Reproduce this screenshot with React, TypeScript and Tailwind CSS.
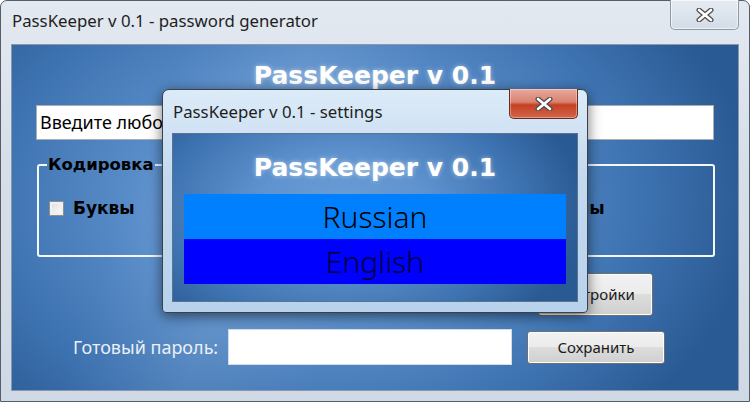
import React from "react";

const clientBg =
  "bg-[radial-gradient(ellipse_60%_90%_at_42%_45%,#6c9ed7_0%,#5f93cf_35%,#3d72b0_75%,#2a5a93_100%)]";

function Win7Button({ children, className = "" }: { children: React.ReactNode; className?: string }) {
  return (
    <div
      className={
        "flex items-center justify-center rounded-[3px] border border-[#707070] bg-[linear-gradient(to_bottom,#f2f2f2_0%,#ebebeb_49%,#dddddd_50%,#cfcfcf_100%)] shadow-[inset_0_0_0_1px_#fcfcfc] text-[15px] text-[#1a1a1a] " +
        className
      }
      style={{ fontFamily: "'Noto Sans', sans-serif" }}
    >
      {children}
    </div>
  );
}

function CloseX({ className = "" }: { className?: string }) {
  return (
    <svg width="18" height="14" viewBox="0 0 18 14" className={className}>
      <path d="M3 2 L15 12 M15 2 L3 12" stroke="#4d4d4d" strokeWidth="5" strokeLinecap="round" />
      <path d="M3 2 L15 12 M15 2 L3 12" stroke="#ffffff" strokeWidth="2.6" strokeLinecap="round" />
    </svg>
  );
}

const dejavu = { fontFamily: "'DejaVu Sans', sans-serif" };

export default function App() {
  return (
    <div
      className="relative w-[750px] h-[402px] overflow-hidden bg-white"
      style={{ fontFamily: "'Noto Sans', sans-serif" }}
    >
      {/* Main window */}
      <div className="absolute inset-0 flex flex-col rounded-t-[7px] border border-[#575d66] bg-[linear-gradient(to_bottom,#e3e9f1_0%,#d6dfe9_40%,#cfd9e5_100%)]">
        {/* Title bar */}
        <div className="relative flex h-[43px] items-start">
          <div className="pl-[11px] pt-[7px] text-[16.8px] text-[#1e1e1e]">
            PassKeeper v 0.1 - password generator
          </div>
          <div className="absolute right-[10px] top-[-1px] flex h-[30px] w-[69px] items-center justify-center rounded-b-[5px] border border-t-0 border-[#8d99a8] bg-[linear-gradient(to_bottom,#e6ecf3,#d3dce7)] shadow-[inset_0_0_0_1px_rgba(255,255,255,0.6)]">
            <CloseX />
          </div>
        </div>

        {/* Client area */}
        <div className={"relative mx-[10px] h-[347px] border border-[#8a98a9] flex flex-col " + clientBg}>
          <div className="absolute inset-0 bg-[linear-gradient(110deg,rgba(255,255,255,0)_20%,rgba(255,255,255,0.08)_35%,rgba(255,255,255,0)_50%)]" />
          {/* Heading */}
          <div className="relative flex justify-center pt-[12px] h-[60px]">
            <div className="text-[25px] font-bold text-white [text-shadow:0_0_5px_rgba(255,255,255,0.5)]" style={dejavu}>
              PassKeeper v 0.1
            </div>
          </div>

          {/* Input */}
          <div className="relative ml-[24px] mr-[24px] h-[35px] bg-white border border-[#abadb3] flex items-center pl-[3px] text-[18px] text-black">
            Введите любое слово
          </div>

          {/* Group box */}
          <fieldset className="relative ml-[25px] mr-[23px] mt-[15px] h-[102px] rounded-[3px] border-2 border-[#f4f7fb] px-[8px]">
            <legend className="px-[1px] text-[16.5px] leading-[20px] font-bold text-black" style={dejavu}>
              Кодировка
            </legend>
            <div className="absolute left-[10px] top-[21px] flex items-center gap-[9px]">
              <div className="h-[15px] w-[15px] border border-[#8f8f8f] bg-[linear-gradient(135deg,#dcdcdc,#ffffff)] shadow-[inset_0_0_0_2px_#f0f0f0]" />
              <div className="text-[17px] font-bold text-black" style={dejavu}>
                Буквы
              </div>
            </div>
            <div className="absolute left-[477px] top-[21px] text-[17px] font-bold text-black" style={dejavu}>
              Символы
            </div>
          </fieldset>

          {/* Buttons row */}
          <div className="relative flex mt-[16px] h-[43px]">
            <Win7Button className="ml-[216px] mt-[-1px] h-[40px] w-[281px]">Сгенерировать</Win7Button>
            <Win7Button className="ml-[29px] h-[43px] w-[115px] border-[#3cc7f0] shadow-[0_0_3px_#7fe3ff,inset_0_0_0_1px_#c5f2ff]">
              Настройки
            </Win7Button>
          </div>

          {/* Bottom row */}
          <div className="relative flex items-center mt-[13px] h-[36px]">
            <div className="ml-[61px] w-[155px] text-[18px] text-[#eaf0f7]">Готовый пароль:</div>
            <div className="h-[36px] w-[284px] bg-white border border-[#d5dce6]" />
            <Win7Button className="ml-[15px] h-[33px] w-[138px]">Сохранить</Win7Button>
          </div>
        </div>
      </div>

      {/* Settings dialog */}
      <div className="absolute left-[162px] top-[89px] w-[426px] h-[224px] rounded-t-[7px] rounded-b-[4px] border border-[#39414b] bg-[linear-gradient(to_bottom,#dcebf8_0%,#c3d9ef_40%,#b9d2ec_100%)] shadow-[0_3px_14px_rgba(0,0,0,0.55)] flex flex-col">
        <div className="relative h-[43px]">
          <div className="pl-[10px] pt-[9px] text-[16.8px] text-[#1e1e1e]">PassKeeper v 0.1 - settings</div>
          <div className="absolute right-[9px] top-[-1px] flex h-[30px] w-[69px] items-center justify-center rounded-b-[5px] border border-t-0 border-[#6b2a20] bg-[linear-gradient(to_bottom,#e9a99c_0%,#d9816f_45%,#c4401f_55%,#d2664c_100%)] shadow-[inset_0_0_0_1px_rgba(255,255,255,0.35)]">
            <CloseX />
          </div>
        </div>
        <div className={"relative mx-[9px] h-[169px] border border-[#5b7290] flex flex-col " + clientBg}>
          <div className="flex justify-center pt-[15px] h-[60px]">
            <div className="text-[25px] font-bold text-white [text-shadow:0_0_5px_rgba(255,255,255,0.5)]" style={dejavu}>
              PassKeeper v 0.1
            </div>
          </div>
          <div className="ml-[11px] w-[382px] h-[45px] bg-[#0080ff] flex items-center justify-center text-[30px] font-light text-black">
            Russian
          </div>
          <div className="ml-[11px] w-[382px] h-[45px] bg-[#0000ff] flex items-center justify-center text-[30px] font-light text-[#00003a]">
            English
          </div>
        </div>
      </div>
    </div>
  );
}
